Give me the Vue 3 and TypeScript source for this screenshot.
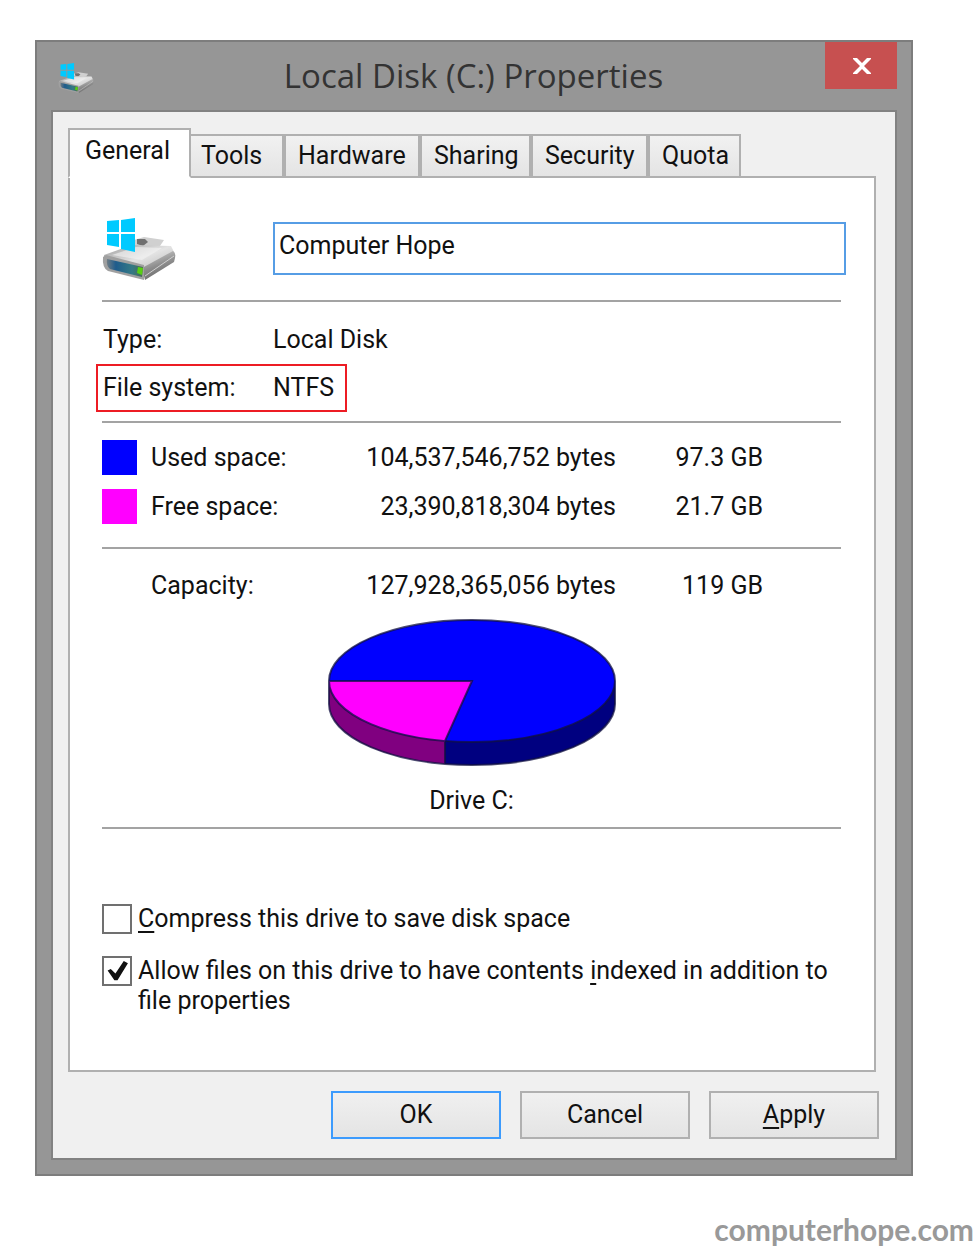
<script setup lang="ts">
import { ref } from 'vue'

const tabs = ['General', 'Tools', 'Hardware', 'Sharing', 'Security', 'Quota']
const active = ref('General')
const driveName = ref('Computer Hope')
const compress = ref(false)
const indexed = ref(true)

const usage = [
  { kind: 'used', label: 'Used space:', bytes: '104,537,546,752 bytes', size: '97.3 GB' },
  { kind: 'free', label: 'Free space:', bytes: '23,390,818,304 bytes', size: '21.7 GB' },
]
</script>

<template>
  <div class="page">
    <main class="window">
      <header class="titlebar">
        <svg class="title-icon" viewBox="0 0 74 64" aria-hidden="true">
          <use href="#drive" />
        </svg>
        <h1>Local Disk (C:) Properties</h1>
        <button class="close" type="button" aria-label="Close">
          <svg viewBox="0 0 20 18" aria-hidden="true">
            <path d="M1 1h4l5 5 5-5h4v1l-7 7 7 7v1h-4l-5-5-5 5H1v-1l7-7-7-7z" />
          </svg>
        </button>
      </header>

      <div class="client">
        <div class="tabs" role="tablist">
          <button
            v-for="tab in tabs"
            :key="tab"
            type="button"
            role="tab"
            class="tab"
            :class="{ active: tab === active }"
            :aria-selected="tab === active"
            @click="active = tab"
          >{{ tab }}</button>
        </div>

        <section class="panel">
          <div class="identity">
            <svg class="drive-icon" viewBox="0 0 74 64" aria-hidden="true">
              <defs>
                <linearGradient id="top" x1="0" y1="0" x2="1" y2="1">
                  <stop offset="0" stop-color="#989898" />
                  <stop offset="0.5" stop-color="#e4e4e4" />
                  <stop offset="1" stop-color="#b4b4b4" />
                </linearGradient>
                <linearGradient id="side" x1="0" y1="0" x2="0.4" y2="1">
                  <stop offset="0" stop-color="#dedede" />
                  <stop offset="0.6" stop-color="#8c8c8c" />
                  <stop offset="1" stop-color="#6a6a6a" />
                </linearGradient>
                <linearGradient id="front" x1="0" y1="0" x2="1" y2="0">
                  <stop offset="0" stop-color="#6f7c84" />
                  <stop offset="0.25" stop-color="#1f5c8c" />
                  <stop offset="0.7" stop-color="#347a85" />
                  <stop offset="1" stop-color="#4c6a50" />
                </linearGradient>
                <g id="drive">
                  <path d="M32 22l10-3 20 3-4 6-26 4z" fill="#d0d0d0" />
                  <path d="M35 21h8l3 3-5 4-6-2z" fill="#707070" />
                  <path d="M2 37L30 27l39 1 3 6-29 20L2 45z" fill="url(#top)" />
                  <path d="M10 37l24-8 26 1-20 12z" fill="#f4f4f4" opacity="0.6" />
                  <path d="M40 50l31-17q4 2 1 11L43 62z" fill="url(#side)" />
                  <path d="M1 39l3-2 38 10v15L6 53q-6-3-5-14z" fill="#a0a0a0" />
                  <path d="M5 41l36 8-1 10-32-8q-4-3-3-10z" fill="url(#front)" />
                  <path d="M36 49l5 1-1 7-5-2z" fill="#58cf12" />
                  <path d="M43 58l29-20" stroke="#cfcfcf" fill="none" />
                  <path d="M5 3l12-1v12H5zM19 2l14-2v14H19zM5 16h12v13L5 27zM19 16h14v18l-14-3z" fill="#00caff" />
                </g>
              </defs>
              <use href="#drive" />
            </svg>
            <input v-model="driveName" class="name" type="text" aria-label="Drive name" spellcheck="false" />
          </div>

          <hr />

          <dl class="facts">
            <div class="fact"><dt>Type:</dt><dd>Local Disk</dd></div>
            <div class="fact marked"><dt>File system:</dt><dd>NTFS</dd></div>
          </dl>

          <hr />

          <table class="usage">
            <tbody>
              <tr v-for="row in usage" :key="row.kind">
                <td class="key"><span class="swatch" :class="row.kind"></span></td>
                <th scope="row">{{ row.label }}</th>
                <td class="bytes">{{ row.bytes }}</td>
                <td class="size">{{ row.size }}</td>
              </tr>
            </tbody>
          </table>

          <hr />

          <table class="usage total">
            <tbody>
              <tr>
                <td class="key"></td>
                <th scope="row">Capacity:</th>
                <td class="bytes">127,928,365,056 bytes</td>
                <td class="size">119 GB</td>
              </tr>
            </tbody>
          </table>

          <figure class="chart">
            <svg viewBox="0 0 288 148" role="img" aria-label="Used and free space">
              <path d="M1 62v23a143 61 0 0 0 116 60v-24z" fill="#800080" />
              <path d="M117 121v24a143 61 0 0 0 170-60V62z" fill="#000080" />
              <ellipse cx="144" cy="62" rx="143" ry="61" fill="#00f" />
              <path d="M144 62H1a143 61 0 0 0 116 60z" fill="#f0f" />
              <path
                d="M1 62a143 61 0 0 1 286 0v23a143 61 0 0 1-286 0zM1 62a143 61 0 0 0 286 0M1 62h143l-27 60v23"
                fill="none" stroke="#101040" stroke-opacity="0.75" stroke-width="2"
              />
            </svg>
            <figcaption>Drive C:</figcaption>
          </figure>

          <hr />

          <div class="options">
            <div class="option">
              <input id="compress" v-model="compress" type="checkbox" />
              <label for="compress"><u>C</u>ompress this drive to save disk space</label>
            </div>
            <div class="option">
              <input id="indexed" v-model="indexed" type="checkbox" />
              <label for="indexed">Allow files on this drive to have contents <u>i</u>ndexed in addition to file properties</label>
            </div>
          </div>
        </section>

        <footer class="actions">
          <button class="primary" type="button">OK</button>
          <button type="button">Cancel</button>
          <button type="button"><u>A</u>pply</button>
        </footer>
      </div>
    </main>
    <p class="credit">computerhope.com</p>
  </div>
</template>

<style>
body {
  margin: 0;
  background: #fff;
}
</style>

<style scoped>
.page {
  padding-top: 40px;
  color: #111;
  font: 25px/30px Roboto, "Liberation Sans", sans-serif;
}
.window {
  box-sizing: border-box;
  margin: 0 61px 0 35px;
  padding: 0 14px 14px;
  border: 2px solid #7d7d7d;
  background: #969696;
}
.titlebar {
  display: flex;
  align-items: flex-start;
  height: 68px;
}
.title-icon {
  width: 36px;
  height: 31px;
  margin: 21px 0 0 7px;
}
h1 {
  flex: 1;
  margin: 12px 0 0;
  padding-left: 28px;
  color: #333;
  font: 400 33px/44px "Open Sans", "Noto Sans", sans-serif;
  text-align: center;
}
.close {
  display: grid;
  place-items: center;
  width: 72px;
  height: 47px;
  padding: 0 0 0 2px;
  border: 0;
  background: #c75050;
}
.close svg {
  width: 20px;
  height: 18px;
  fill: #fff;
}
.client {
  padding: 16px 16px 19px 15px;
  border: 2px solid #828282;
  background: #f0f0f0;
}
.tabs {
  display: grid;
  grid-template-columns: 119px 97px 136px 111px 117px 93px;
  align-items: end;
  margin-bottom: -2px;
}
.tab {
  height: 44px;
  padding: 0 0 0 12px;
  border: 2px solid #b0b0b0;
  background: linear-gradient(#f1f1f1, #e4e4e4);
  color: inherit;
  font: inherit;
  text-align: left;
}
.tab.active {
  position: relative;
  height: 50px;
  margin-right: -4px;
  padding: 0 0 4px 15px;
  border-bottom-color: #fff;
  background: #fff;
}
.panel {
  margin-right: 3px;
  padding: 40px 33px 54px 32px;
  border: 2px solid #b0b0b0;
  background: #fff;
}
.identity {
  display: flex;
  align-items: flex-start;
  margin-right: -5px;
}
.drive-icon {
  width: 74px;
  height: 64px;
  margin-right: 97px;
}
.name {
  flex: 1;
  box-sizing: border-box;
  min-width: 0;
  height: 53px;
  margin-top: 4px;
  padding: 0 4px 6px;
  border: 2px solid #569de5;
  outline: 0;
  background: #fff;
  color: inherit;
  font: inherit;
}
hr {
  height: 2px;
  margin: 0;
  border: 0;
  background: #a3a3a3;
}
.identity + hr {
  margin-top: 18px;
}
.facts {
  margin: 14px 0 9px;
}
.fact {
  display: flex;
  align-items: center;
  box-sizing: border-box;
  width: 251px;
  height: 48px;
  margin-left: -6px;
  border: 2px solid transparent;
  padding-left: 5px;
  white-space: nowrap;
}
.fact.marked {
  border-color: #ed1c24;
}
dt {
  flex: none;
  width: 170px;
}
dd {
  margin: 0;
}
.usage {
  width: 661px;
  margin: 10px 0 16px;
  border-collapse: collapse;
  table-layout: fixed;
}
.usage tr {
  height: 49px;
}
.usage td,
.usage th {
  padding: 0;
  font-weight: 400;
  text-align: left;
  white-space: nowrap;
}
.usage .key {
  width: 49px;
}
.usage th {
  width: 190px;
}
.usage .bytes {
  width: 275px;
  text-align: right;
}
.usage .size {
  text-align: right;
}
.usage.total {
  margin: 12px 0 9px;
}
.swatch {
  display: block;
  width: 35px;
  height: 35px;
}
.swatch.used {
  background: #00f;
}
.swatch.free {
  background: #f0f;
}
.chart {
  margin: 0 0 11px;
  text-align: center;
}
.chart svg {
  display: block;
  width: 288px;
  height: 148px;
  margin: 0 auto 19px;
}
.options {
  display: grid;
  gap: 22px;
  margin-top: 75px;
}
.option {
  display: flex;
  align-items: flex-start;
  gap: 6px;
}
.option input {
  flex: none;
  appearance: none;
  width: 30px;
  height: 30px;
  margin: 0;
  border: 2px solid #707070;
  background: #fff;
}
.option input:checked::before {
  content: "";
  display: block;
  width: 26px;
  height: 26px;
  background: #111;
  clip-path: polygon(14% 48%, 26% 42%, 44% 60%, 76% 12%, 92% 20%, 52% 86%, 40% 86%);
}
u {
  text-decoration-thickness: 2px;
  text-underline-offset: 4px;
  text-decoration-skip-ink: none;
}
.actions {
  display: flex;
  justify-content: flex-end;
  gap: 19px;
  margin-top: 19px;
}
.actions button {
  width: 170px;
  height: 48px;
  padding: 0;
  border: 2px solid #b0b0b0;
  background: linear-gradient(#f0f0f0, #e4e4e4);
  color: inherit;
  font: inherit;
}
.actions .primary {
  border-color: #3c9bfd;
}
.credit {
  margin: 36px 0 0;
  color: #999;
  font: 700 30px/34px Lato, sans-serif;
  text-align: right;
}
</style>
